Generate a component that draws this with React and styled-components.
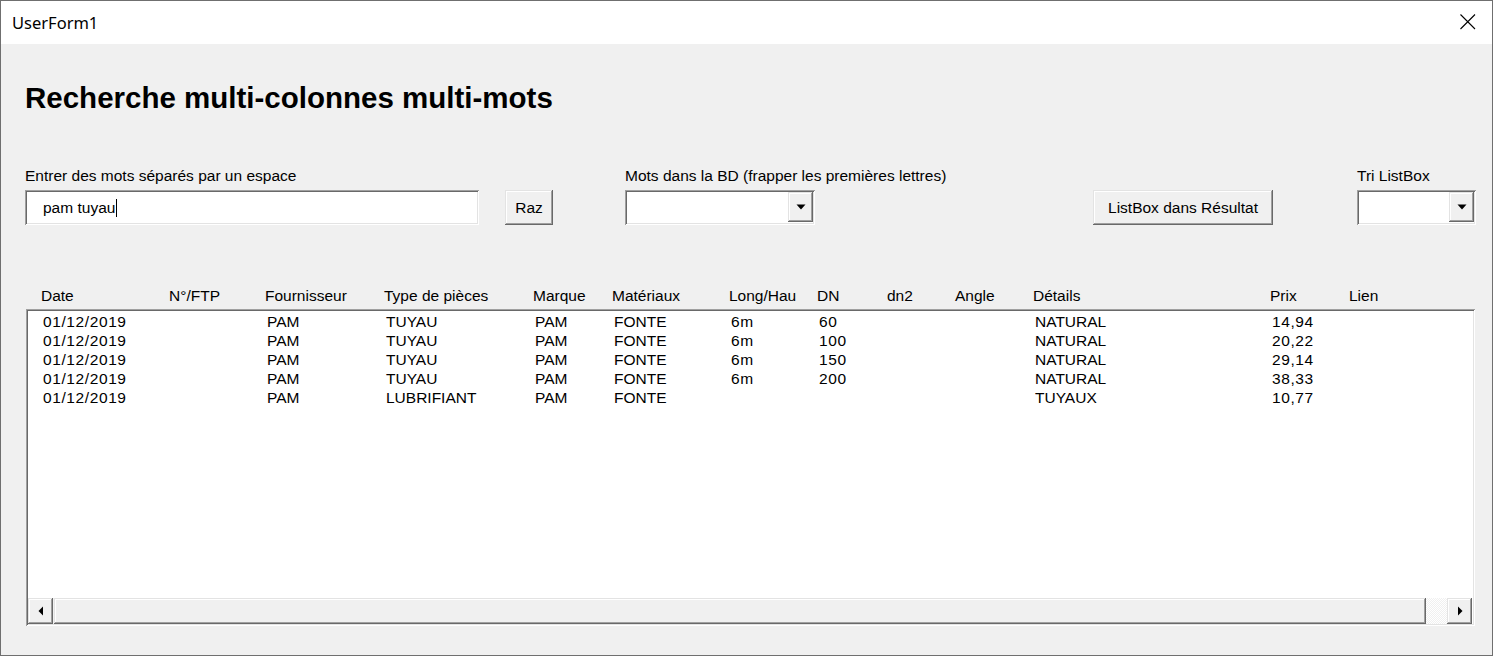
import React from "react";
import styled, { createGlobalStyle, css } from "styled-components";

const GlobalStyle = createGlobalStyle`
  html, body {
    margin: 0;
    padding: 0;
    background: #ffffff;
  }
  body {
    font-family: "Liberation Sans", Arial, sans-serif;
  }
  * {
    box-sizing: border-box;
  }
`;

// classic windows 3d edges
const sunken = css`
  box-shadow: inset 1px 1px #a0a0a0, inset -1px -1px #ffffff,
    inset 2px 2px #696969, inset -2px -2px #e3e3e3;
`;

const raised = css`
  box-shadow: inset -1px -1px #696969, inset 1px 1px #e3e3e3,
    inset -2px -2px #a0a0a0, inset 2px 2px #ffffff;
`;

const columns = [128, 96, 119, 149, 79, 117, 88, 70, 68, 78, 237, 79, 100];

const headers = [
  "Date",
  "N°/FTP",
  "Fournisseur",
  "Type de pièces",
  "Marque",
  "Matériaux",
  "Long/Hau",
  "DN",
  "dn2",
  "Angle",
  "Détails",
  "Prix",
  "Lien",
];

const numeric = [0, 6, 7, 11];

const rows = [
  ["01/12/2019", "", "PAM", "TUYAU", "PAM", "FONTE", "6m", "60", "", "", "NATURAL", "14,94", ""],
  ["01/12/2019", "", "PAM", "TUYAU", "PAM", "FONTE", "6m", "100", "", "", "NATURAL", "20,22", ""],
  ["01/12/2019", "", "PAM", "TUYAU", "PAM", "FONTE", "6m", "150", "", "", "NATURAL", "29,14", ""],
  ["01/12/2019", "", "PAM", "TUYAU", "PAM", "FONTE", "6m", "200", "", "", "NATURAL", "38,33", ""],
  ["01/12/2019", "", "PAM", "LUBRIFIANT", "PAM", "FONTE", "", "", "", "", "TUYAUX", "10,77", ""],
];

const App = () => {
  return (
    <>
      <GlobalStyle />
      <Window>
        <TitleBar>
          <span>UserForm1</span>
          <svg width="16" height="16" viewBox="0 0 16 16">
            <path d="M0.5 0.5 L15 15 M15 0.5 L0.5 15" stroke="#000" strokeWidth="1.1" fill="none" />
          </svg>
        </TitleBar>
        <Body>
          <Heading>Recherche multi-colonnes multi-mots</Heading>

          <ControlsRow>
            <Field $width={454}>
              <Label>Entrer des mots séparés par un espace</Label>
              <TextBox>
                pam tuyau
                <Caret />
              </TextBox>
            </Field>
            <Button $width={48} $offset={26}>Raz</Button>
            <Field $width={190} $offset={72}>
              <Label>Mots dans la BD (frapper les premières lettres)</Label>
              <Combo>
                <DropButton>
                  <svg width="10" height="6" viewBox="0 0 10 6">
                    <polygon points="0.5,0.5 9.5,0.5 5,5.5" fill="#000" />
                  </svg>
                </DropButton>
              </Combo>
            </Field>
            <Button $width={180} $offset={278}>ListBox dans Résultat</Button>
            <Field $width={119} $offset={84}>
              <Label>Tri ListBox</Label>
              <Combo>
                <DropButton>
                  <svg width="10" height="6" viewBox="0 0 10 6">
                    <polygon points="0.5,0.5 9.5,0.5 5,5.5" fill="#000" />
                  </svg>
                </DropButton>
              </Combo>
            </Field>
          </ControlsRow>

          <HeaderRow>
            {headers.map((h, i) => (
              <Cell key={h} $width={columns[i]}>
                {h}
              </Cell>
            ))}
          </HeaderRow>

          <ListBox>
            <Rows>
              {rows.map((r, ri) => (
                <Row key={ri}>
                  {r.map((v, i) => (
                    <Cell key={i} $width={columns[i]} $num={numeric.includes(i)}>
                      {v}
                    </Cell>
                  ))}
                </Row>
              ))}
            </Rows>
            <ScrollBar>
              <ScrollButton>
                <svg width="6" height="10" viewBox="0 0 6 10">
                  <polygon points="5,0.5 5,9.5 0.5,5" fill="#000" />
                </svg>
              </ScrollButton>
              <Thumb />
              <Track />
              <ScrollButton>
                <svg width="6" height="10" viewBox="0 0 6 10">
                  <polygon points="1,0.5 1,9.5 5.5,5" fill="#000" />
                </svg>
              </ScrollButton>
            </ScrollBar>
          </ListBox>
        </Body>
      </Window>
    </>
  );
};

const Window = styled.div`
  width: 1493px;
  height: 656px;
  border: 1px solid #6f6f6f;
  display: flex;
  flex-direction: column;
  background: #f0f0f0;
  overflow: hidden;
`;

const TitleBar = styled.div`
  height: 43px;
  flex-shrink: 0;
  background: #ffffff;
  display: flex;
  align-items: center;
  justify-content: space-between;
  padding: 0 16px 0 11px;
  font-family: "Noto Sans", "Open Sans", sans-serif;
  font-size: 16.5px;
  color: #000;

  svg {
    margin-top: -2px;
  }
`;

const Body = styled.div`
  flex: 1;
  display: flex;
  flex-direction: column;
  padding: 37px 0 0 24px;
  color: #000;
  font-size: 15.5px;
`;

const Heading = styled.h1`
  margin: 0;
  font-size: 29.5px;
  line-height: 34px;
  font-weight: bold;
`;

const ControlsRow = styled.div`
  margin-top: 51px;
  display: flex;
  align-items: flex-end;
`;

const Field = styled.div`
  width: ${(p) => p.$width}px;
  margin-left: ${(p) => p.$offset || 0}px;
  flex-shrink: 0;
  display: flex;
  flex-direction: column;
  gap: 5px;
`;

const Label = styled.div`
  line-height: 19px;
  white-space: nowrap;
`;

const TextBox = styled.div`
  height: 35px;
  background: #ffffff;
  ${sunken};
  display: flex;
  align-items: center;
  padding-left: 18px;
  padding-top: 1px;
`;

const Caret = styled.span`
  display: inline-block;
  width: 1px;
  height: 18px;
  margin-left: 1px;
  background: #000;
`;

const Button = styled.div`
  width: ${(p) => p.$width}px;
  margin-left: ${(p) => p.$offset || 0}px;
  flex-shrink: 0;
  height: 35px;
  background: #f0f0f0;
  ${raised};
  display: flex;
  align-items: center;
  justify-content: center;
  white-space: nowrap;
`;

const Combo = styled.div`
  height: 35px;
  background: #ffffff;
  ${sunken};
  display: flex;
  justify-content: flex-end;
  padding: 2px;
`;

const DropButton = styled.div`
  width: 25px;
  height: 30px;
  background: #f0f0f0;
  ${raised};
  display: flex;
  align-items: center;
  justify-content: center;
  padding-left: 1px;
`;

const HeaderRow = styled.div`
  margin-top: 61px;
  padding-left: 16px;
  display: flex;
  line-height: 19px;
`;

const Cell = styled.div`
  width: ${(p) => p.$width}px;
  flex-shrink: 0;
  white-space: nowrap;
  letter-spacing: ${(p) => (p.$num ? "0.6px" : "0")};
`;

const ListBox = styled.div`
  margin: 4px 0 0 1px;
  width: 1449px;
  height: 317px;
  background: #ffffff;
  ${sunken};
  padding: 2px 3px 2px 2px;
  display: flex;
  flex-direction: column;
`;

const Rows = styled.div`
  flex: 1;
  padding: 1px 0 0 15px;
`;

const Row = styled.div`
  display: flex;
  height: 19px;
  line-height: 19px;
`;

const ScrollBar = styled.div`
  height: 26px;
  display: flex;
  background: #f0f0f0;
`;

const ScrollButton = styled.div`
  width: 25px;
  height: 100%;
  background: #f0f0f0;
  ${raised};
  display: flex;
  align-items: center;
  justify-content: center;
`;

const Thumb = styled.div`
  flex: 1;
  margin-left: 1px;
  height: 100%;
  background: #f0f0f0;
  ${raised};
`;

const Track = styled.div`
  width: 21px;
  height: 100%;
  background: repeating-conic-gradient(#f0f0f0 0 25%, #ffffff 0 50%) 0 0 / 2px 2px;
`;

export default App;
